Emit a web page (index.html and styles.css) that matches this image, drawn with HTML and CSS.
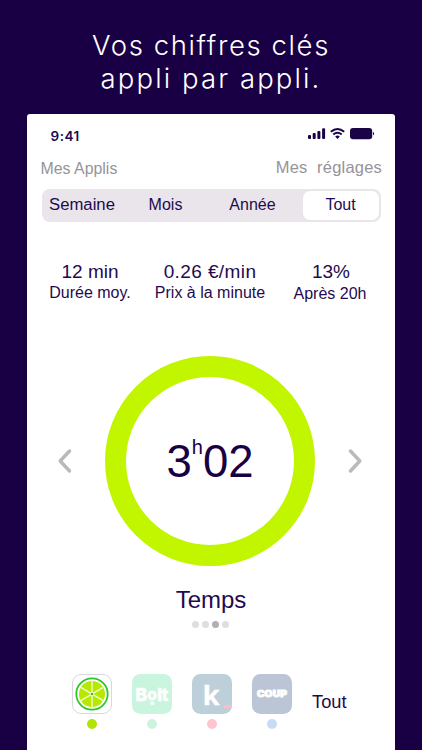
FILE: index.html
```html
<!DOCTYPE html>
<html lang="fr">
<head>
<meta charset="utf-8">
<title>Chiffres clés</title>
<link rel="stylesheet" href="styles.css">
</head>
<body>
<h1 class="headline"><span class="line-one">Vos chiffres clés</span><span class="line-two">appli par appli.</span></h1>
<main class="phone">
  <div class="status">
    <span class="time">9:41</span>
    <svg class="status-icons" width="67" height="14" viewBox="0 0 67 14" fill="#1a0446">
      <rect x="0" y="8" width="3" height="4" rx="1"/><rect x="4.7" y="6" width="3" height="6" rx="1"/><rect x="9.4" y="4" width="3" height="8" rx="1"/><rect x="14.1" y="1.3" width="3" height="10.7" rx="1"/>
      <g fill="none" stroke="#1a0446" stroke-width="2"><path d="M22.8 4.8Q29.5-.9 36.2 4.8"/><path d="M25.3 7.5Q29.5 4 33.7 7.5"/></g>
      <path d="M27.2 9.4Q29.5 7.8 31.8 9.4L29.5 12Z"/>
      <rect x="42" y="1" width="22.2" height="11.2" rx="3"/><path d="M65 4.7q2.2 1.9 0 3.8z"/>
    </svg>
  </div>
  <nav class="top-nav"><span class="nav-apps">Mes Applis</span><span class="nav-settings">Mes&nbsp; réglages</span></nav>
  <div class="segments">
    <span class="segment week">Semaine</span><span class="segment">Mois</span><span class="segment year">Année</span><span class="segment selected">Tout</span>
  </div>
  <section class="stats">
    <div class="stat duration"><strong>12 min</strong><span>Durée moy.</span></div>
    <div class="stat price"><strong>0.26 €/min</strong><span>Prix à la minute</span></div>
    <div class="stat late"><strong>13%</strong><span>Après 20h</span></div>
  </section>
  <section class="gauge">
    <svg class="arrow" width="16" height="26" viewBox="0 0 16 26"><path d="M12.5 3L3.2 13l9.3 10"/></svg>
    <div class="ring"><span class="digits">3</span><span class="unit">h</span><span class="digits">02</span></div>
    <svg class="arrow" width="16" height="26" viewBox="0 0 16 26"><path d="M3.5 3l9.3 10-9.3 10"/></svg>
  </section>
  <h2 class="metric">Temps</h2>
  <div class="pager"><i></i><i></i><i class="current"></i><i></i></div>
  <section class="apps">
    <div class="app">
      <svg width="40" height="40" viewBox="0 0 40 40">
        <rect x=".5" y=".5" width="39" height="39" rx="8.5" fill="#fff" stroke="#d9d7dc"/>
        <circle cx="20" cy="20" r="15.7" fill="#fff" stroke="#2fc52b" stroke-width="1.8"/>
        <circle cx="20" cy="20" r="13" fill="#b5e900"/>
        <path d="M20 6.5v27M8.3 13.2l23.4 13.6M8.3 26.8l23.4-13.6" stroke="#f3fbd0" stroke-width="1.4"/>
        <circle cx="20" cy="20" r="2.2" fill="#f3fbd0"/><circle cx="20" cy="20" r="1.3" fill="#2fc52b"/>
      </svg>
      <i class="marker lime"></i>
    </div>
    <div class="app">
      <svg width="40" height="40" viewBox="0 0 40 40"><rect width="40" height="40" rx="8.5" fill="#c9f5df"/><text class="logo bolt" x="3.3" y="26.8">B<tspan class="bolt-o" x="15.3" y="25.6">o</tspan><tspan x="25 29.4" y="26.8">lt</tspan></text><circle cx="20.3" cy="29.2" r="1.9" fill="#fff"/></svg>
      <i class="marker mint"></i>
    </div>
    <div class="app">
      <svg width="40" height="40" viewBox="0 0 40 40"><rect width="40" height="40" rx="8.5" fill="#bdd0da"/><text class="logo kapten" x="10.7" y="30.7">k</text><path d="M31.5 32.8q0-1.8 1.8-1.8H40q0 1.8-.5 3.5h-6.2q-1.8 0-1.8-1.7z" fill="#fbbcca"/></svg>
      <i class="marker pink"></i>
    </div>
    <div class="app">
      <svg width="40" height="40" viewBox="0 0 40 40"><rect width="40" height="40" rx="8.5" fill="#bcc5d6"/><g class="logo coup" transform="translate(0 22.9) scale(1.2 1)"><text x="4.1 10.4 17.2 23.6">COUP</text></g></svg>
      <i class="marker blue"></i>
    </div>
    <span class="all-apps">Tout</span>
  </section>
</main>
</body>
</html>
```
FILE: styles.css
```css
* { box-sizing: border-box; }
body {
  margin: 0;
  height: 750px;
  overflow: hidden;
  padding: 28.5px 27px 0;
  background: #190044;
  color: #1f0a50;
  font-family: "Liberation Sans", Arial, sans-serif;
}
.headline {
  margin: 0;
  height: 85.5px;
  color: #fff;
  font: 350 27.5px/33px Inter, sans-serif;
  text-align: center;
}
.headline span { display: block; }
.line-one { letter-spacing: 1.6px; }
.line-two { letter-spacing: 2.1px; }
.phone {
  height: 636px;
  background: #fff;
  border-radius: 3px 3px 0 0;
}
.status {
  height: 40px;
  padding: 13px 20px 0 23.5px;
  display: flex;
  justify-content: space-between;
}
.time {
  font: 600 13.5px/18px Inter, sans-serif;
  letter-spacing: .5px;
}
.top-nav {
  height: 34.5px;
  padding: 0 13px 0 13.5px;
  display: flex;
  justify-content: space-between;
  color: #96939a;
  line-height: 20px;
}
.nav-apps { font-size: 15.9px; padding-top: 5px; }
.nav-settings { font-size: 16.5px; letter-spacing: .2px; padding-top: 3px; }
.segments {
  height: 33px;
  margin: 0 14px 0 14.5px;
  padding: 2px 2.5px;
  display: grid;
  grid-template-columns: 80px 83px 89px 1fr;
  background: #e9e5ea;
  border-radius: 8px;
}
.segment {
  font-size: 16px;
  line-height: 28px;
  text-align: center;
}
.week { font-size: 16.7px; padding-right: 4px; }
.year { padding-left: 2px; }
.selected {
  margin-left: 6.5px;
  border-radius: 7px;
  background: #fff;
}
.stats {
  padding-top: 39px;
  height: 134.5px;
  display: grid;
  grid-template-columns: 126px 114px 126px;
}
.stat { text-align: center; }
.stat strong, .stat span { display: block; white-space: nowrap; }
.stat strong { font-weight: 400; font-size: 19px; line-height: 22px; }
.stat span { font-size: 16px; line-height: 19px; }
.price strong { letter-spacing: .4px; }
.late { padding: .5px 0 0 2px; }
.late span { margin: .5px 0 0 -2px; }
.gauge {
  height: 210px;
  padding: 0 32px 0 30px;
  display: flex;
  align-items: center;
  justify-content: space-between;
}
.arrow { fill: none; stroke: #bcb9be; stroke-width: 3.5; stroke-linecap: round; stroke-linejoin: round; }
.ring {
  width: 210px;
  height: 210px;
  border: 21px solid #c1f500;
  border-radius: 50%;
  display: flex;
  align-items: center;
  justify-content: center;
  color: #190044;
}
.digits { font-size: 45.5px; line-height: 52px; padding-top: 1px; }
.unit { font-size: 20px; line-height: 20px; padding-bottom: 28px; }
.metric {
  margin: 19.5px 0 0;
  font-weight: 400;
  font-size: 24px;
  line-height: 28px;
  text-align: center;
}
.pager {
  display: flex;
  justify-content: center;
  gap: 3px;
  padding: 7px 2px 0 0;
}
.pager i { width: 7px; height: 7px; border-radius: 50%; background: #dedede; }
.pager .current { background: #b0b0b0; }
.apps {
  display: flex;
  gap: 20px;
  margin: 46px 0 0 45px;
}
.app { display: flex; flex-direction: column; align-items: center; }
.marker { width: 10px; height: 10px; margin-top: 5px; border-radius: 50%; }
.lime { background: #b1e400; }
.mint { background: #ccf3df; }
.pink { background: #fec5d0; }
.blue { background: #c8dbf6; }
.logo { fill: #fff; font-family: Inter, sans-serif; font-weight: 900; }
.bolt { font-size: 18px; font-weight: 800; stroke: #fff; stroke-width: .3px; }
.bolt-o { font-size: 15.5px; }
.kapten { font-family: "Open Sans", sans-serif; font-weight: 700; font-size: 27px; stroke: #fff; stroke-width: .4px; }
.coup { font-size: 8.5px; stroke: #fff; stroke-width: .8px; }
.all-apps { font-size: 18.3px; line-height: 22px; padding-top: 17px; }
```
